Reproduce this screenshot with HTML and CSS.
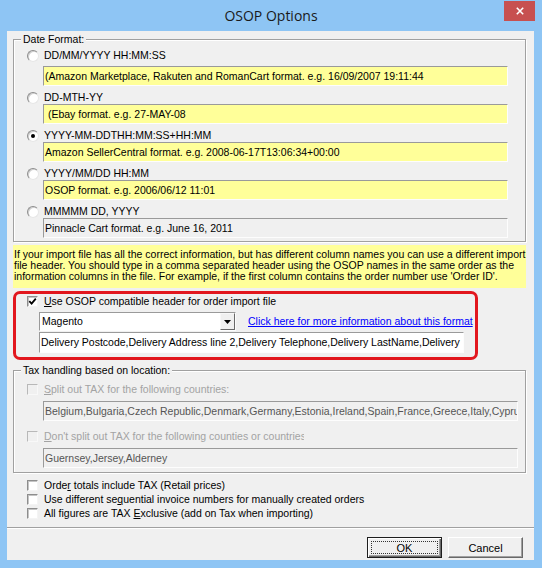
FILE: index.html
```html
<!DOCTYPE html>
<html>
<head>
<meta charset="utf-8">
<title>OSOP Options</title>
<link rel="stylesheet" href="styles.css">
</head>
<body>
<div class="window">
  <div class="titlebar">
    <div class="title">OSOP Options</div>
    <div class="close">
      <svg width="8" height="8" viewBox="0 0 8 8"><path d="M0.8 0.8L7.2 7.2M7.2 0.8L0.8 7.2" stroke="#fff" stroke-width="1.6" fill="none"/></svg>
    </div>
  </div>
  <div class="client">
    <fieldset class="group date-group">
      <legend>Date Format:</legend>
      <div class="group-body">
        <div class="opt opt-first">
          <div class="choice"><span class="radio"></span><span>DD/MM/YYYY HH:MM:SS</span></div>
          <div class="field hint">(Amazon Marketplace, Rakuten and RomanCart format. e.g. 16/09/2007 19:11:44</div>
        </div>
        <div class="opt">
          <div class="choice"><span class="radio"></span><span>DD-MTH-YY</span></div>
          <div class="field hint"> (Ebay format. e.g. 27-MAY-08</div>
        </div>
        <div class="opt">
          <div class="choice"><span class="radio"><span class="dot"></span></span><span>YYYY-MM-DDTHH:MM:SS+HH:MM</span></div>
          <div class="field hint">Amazon SellerCentral format. e.g. 2008-06-17T13:06:34+00:00</div>
        </div>
        <div class="opt">
          <div class="choice"><span class="radio"></span><span>YYYY/MM/DD HH:MM</span></div>
          <div class="field hint">OSOP format. e.g. 2006/06/12 11:01</div>
        </div>
        <div class="opt">
          <div class="choice"><span class="radio"></span><span>MMMMM DD, YYYY</span></div>
          <div class="field hint hint-plain">Pinnacle Cart format. e.g. June 16, 2011</div>
        </div>
      </div>
    </fieldset>

    <div class="info">If your import file has all the correct information, but has different column names you can use a different import<br>file header. You should type in a comma separated header using the OSOP names in the same order as the<br>information columns in the file. For example, if the first column contains the order number use 'Order ID'.</div>

    <div class="highlight">
      <div class="choice">
        <span class="check"><svg width="9" height="9" viewBox="0 0 9 9"><path d="M1.3 4.2L3.6 6.6L7.8 1.6" stroke="#000" stroke-width="1.8" fill="none"/></svg></span>
        <span><u>U</u>se OSOP compatible header for order import file</span>
      </div>
      <div class="combo-row">
        <div class="combo">
          <span class="combo-text">Magento</span>
          <span class="combo-btn"><svg width="7" height="4" viewBox="0 0 7 4"><path d="M0 0H7L3.5 4Z" fill="#000"/></svg></span>
        </div>
        <span class="link">Click here for more information about this format</span>
      </div>
      <div class="field header-field">Delivery Postcode,Delivery Address line 2,Delivery Telephone,Delivery LastName,Delivery</div>
    </div>

    <fieldset class="group tax-group">
      <legend>Tax handling based on location:</legend>
      <div class="group-body">
        <div class="choice disabled"><span class="check"></span><span><u>S</u>plit out TAX for the following countries:</span></div>
        <div class="field tax-field">Belgium,Bulgaria,Czech Republic,Denmark,Germany,Estonia,Ireland,Spain,France,Greece,Italy,Cyprus</div>
        <div class="choice disabled tax-second"><span class="check"></span><span class="clip-label"><u>D</u>on't split out TAX for the following counties or countries</span></div>
        <div class="field tax-field">Guernsey,Jersey,Alderney</div>
      </div>
    </fieldset>

    <div class="options">
      <div class="choice row14"><span class="check"></span><span>Orde<u>r</u> totals include TAX (Retail prices)</span></div>
      <div class="choice row14"><span class="check"></span><span>Use different se<u>q</u>uential invoice numbers for manually created orders</span></div>
      <div class="choice row14"><span class="check"></span><span>All figures are TAX <u>E</u>xclusive (add on Tax when importing)</span></div>
    </div>

    <div class="separator"></div>

    <div class="buttons">
      <div class="btn btn-default"><span class="focus">OK</span></div>
      <div class="btn">Cancel</div>
    </div>
  </div>
</div>
</body>
</html>
```

FILE: styles.css
```css
html, body {
  margin: 0;
  padding: 0;
}

body {
  width: 542px;
  height: 568px;
  overflow: hidden;
  font-family: "Liberation Sans", Arial, sans-serif;
  font-size: 10.5px;
  color: #000;
}

.window {
  width: 542px;
  height: 568px;
  background: #8ec5f4;
  box-sizing: border-box;
}

.titlebar {
  height: 31px;
  padding: 0 7px;
  display: grid;
  grid-template-columns: 1fr auto 1fr;
  align-items: center;
}

.title {
  grid-column: 2;
  font-family: "Open Sans", "Noto Sans", sans-serif;
  font-size: 14px;
  color: #1a1a1a;
  line-height: 18px;
}

.close {
  grid-column: 3;
  justify-self: end;
  align-self: start;
  margin-top: 1px;
  width: 31px;
  height: 20px;
  background: #c75050;
  display: flex;
  align-items: center;
  justify-content: center;
}

.close svg {
  display: block;
}

.client {
  margin: 0 8px 0 7px;
  height: 529px;
  background: #f0f0f0;
  overflow: hidden;
}

/* group boxes */
.group {
  margin: 0 0 0 6px;
  padding: 3px 0;
  width: 513px;
  min-width: 0;
  box-sizing: border-box;
  border: 1px solid #a0a0a0;
  box-shadow: inset 1px 1px 0 #fff, 1px 1px 0 #fff;
}

.group legend {
  margin-left: 7px;
  padding: 0 2px;
  line-height: 13px;
  background: #f0f0f0;
}

.date-group {
  margin-top: 2px;
}

.group-body {
  padding-left: 13px;
}

.opt + .opt {
  margin-top: 5px;
}

.choice {
  display: flex;
  align-items: center;
  gap: 5px;
  line-height: 13px;
  height: 13px;
  white-space: nowrap;
}

.choice .check + span {
  margin-left: 1px;
}

.radio {
  width: 12px;
  height: 12px;
  box-sizing: border-box;
  border-radius: 50%;
  background: #fff;
  border: 1px solid;
  border-color: #8d8d8d #e6e6e6 #e6e6e6 #8d8d8d;
  box-shadow: inset 1px 1px 0 #cfcfcf;
  display: flex;
  align-items: center;
  justify-content: center;
  flex: none;
}

.dot {
  width: 4px;
  height: 4px;
  border-radius: 50%;
  background: #000;
}

.check {
  width: 11px;
  height: 11px;
  box-sizing: border-box;
  background: #fff;
  border: 1px solid;
  border-color: #8d8d8d #f4f4f4 #f4f4f4 #8d8d8d;
  box-shadow: inset 1px 1px 0 #c4c4c4;
  display: flex;
  align-items: center;
  justify-content: center;
  flex: none;
}

.check svg {
  display: block;
}

/* text fields */
.field {
  box-sizing: border-box;
  height: 20px;
  line-height: 18px;
  border: 1px solid;
  border-color: #9a9a9a #fdfdfd #fdfdfd #9a9a9a;
  padding: 0 1px;
  white-space: pre;
  overflow: hidden;
}

.hint {
  margin-left: 16px;
  width: 465px;
  background: #ffff99;
}

.opt-first .hint {
  margin-top: 4px;
}

.hint-plain {
  background: #f0f0f0;
}

.info {
  margin: 3px 0 0 6px;
  width: 513px;
  box-sizing: border-box;
  padding: 4px 0 6px 1px;
  line-height: 11px;
  background: #ffff99;
  white-space: nowrap;
  overflow: hidden;
}

/* highlighted header block */
.highlight {
  margin: 3px 0 0 6px;
  width: 465px;
  box-sizing: border-box;
  border: 3px solid #e2171e;
  border-radius: 7px;
  padding: 1px 0 4px 11px;
}

.combo-row {
  margin-top: 4px;
  display: flex;
  align-items: center;
}

.combo {
  margin-left: 12px;
  width: 197px;
  height: 19px;
  box-sizing: border-box;
  background: #fff;
  border: 1px solid;
  border-color: #9a9a9a #fdfdfd #fdfdfd #9a9a9a;
  display: flex;
  align-items: stretch;
}

.combo-text {
  flex: 1;
  padding-left: 2px;
  line-height: 17px;
}

.combo-btn {
  width: 15px;
  box-sizing: border-box;
  background: #f0f0f0;
  border: 1px solid;
  border-color: #f8f8f8 #696969 #696969 #f8f8f8;
  display: flex;
  align-items: center;
  justify-content: center;
}

.combo-btn svg {
  display: block;
}

.link {
  margin-left: 12px;
  white-space: nowrap;
  color: #0000ff;
  text-decoration: underline;
  line-height: 13px;
}

.header-field {
  margin: 1px 0 0 12px;
  width: 425px;
  height: 21px;
  line-height: 19px;
  background: #fff;
}

/* tax group */
.tax-group {
  margin-top: 4px;
  padding: 6px 0 4px;
}

.disabled {
  color: #a3a3a3;
}

.disabled .check {
  background: #f0f0f0;
  border-color: #b8b8b8 #f8f8f8 #f8f8f8 #b8b8b8;
  box-shadow: none;
}

.clip-label {
  width: 260px;
  overflow: hidden;
}

.tax-field {
  margin: 5px 0 0 16px;
  width: 475px;
  background: #f0f0f0;
  color: #555;
}

.tax-second {
  margin-top: 9px;
}

/* bottom options */
.options {
  margin: 5px 0 0 20px;
}

.row14 {
  height: 14px;
  line-height: 14px;
}

.separator {
  margin-top: 7px;
  height: 0;
  border-top: 1px solid #a0a0a0;
  border-bottom: 1px solid #fff;
}

.buttons {
  margin-top: 8px;
  padding-right: 11px;
  display: flex;
  justify-content: flex-end;
  gap: 6px;
}

.btn {
  width: 75px;
  height: 21px;
  box-sizing: border-box;
  background: #f0f0f0;
  border: 1px solid;
  border-color: #fff #696969 #696969 #fff;
  box-shadow: inset -1px -1px 0 #a0a0a0;
  display: flex;
  align-items: center;
  justify-content: center;
  font-size: 11px;
}

.btn-default {
  border: 1px solid #1e1e1e;
  box-shadow: inset 1px 1px 0 #fff, inset -1px -1px 0 #696969, inset -2px -2px 0 #a0a0a0;
  padding: 3px;
  align-items: stretch;
}

.focus {
  flex: 1;
  border: 1px dotted #333;
  display: flex;
  align-items: center;
  justify-content: center;
}
```
